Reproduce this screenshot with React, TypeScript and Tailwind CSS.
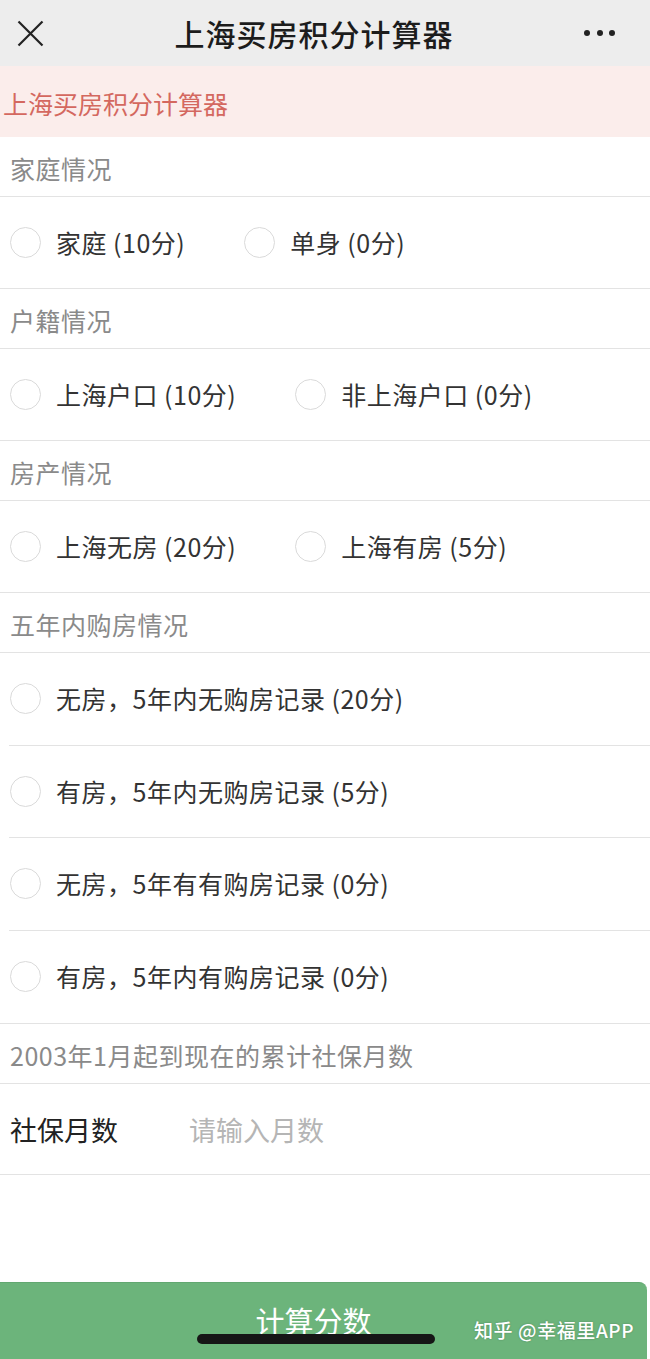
const font = "font-['Noto_Sans_CJK_SC','Noto_Sans',sans-serif]";

type Option = { label: string };

function Radio() {
  return (
    <span className="h-[31px] w-[31px] shrink-0 rounded-full border-[1.5px] border-[#dadada] bg-white" />
  );
}

function OptionItem({ label }: Option) {
  return (
    <div className="mr-[59px] flex items-center">
      <Radio />
      <span className="ml-[15px] text-[25px] leading-none tracking-[0.5px] text-[#333333]">{label}</span>
    </div>
  );
}

function SectionHeader({ title }: { title: string }) {
  return (
    <div className="flex h-[60px] items-center border-b border-[#e3e3e3] pl-[10px] pt-[4px] text-[25px] leading-none tracking-[0.5px] text-[#8a8a8a]">
      {title}
    </div>
  );
}

function InlineRow({ options }: { options: string[] }) {
  return (
    <div className="flex h-[92px] items-center border-b border-[#e3e3e3] pl-[10px]">
      {options.map((o) => (
        <OptionItem key={o} label={o} />
      ))}
    </div>
  );
}

const fiveYear = [
  "无房，5年内无购房记录 (20分)",
  "有房，5年内无购房记录 (5分)",
  "无房，5年有有购房记录 (0分)",
  "有房，5年内有购房记录 (0分)",
];

export default function App() {
  return (
    <div className={`relative flex h-[1359px] w-[650px] flex-col overflow-hidden bg-white ${font}`}>
      {/* 顶部导航 */}
      <div className="flex h-[66px] shrink-0 items-center bg-[#ededed]">
        <div className="flex w-[60px] items-center pl-[17px]">
          <svg width="27" height="27" viewBox="0 0 27 27" fill="none">
            <path d="M1.5 1.5L25.5 25.5M25.5 1.5L1.5 25.5" stroke="#222" strokeWidth="2.2" />
          </svg>
        </div>
        <div className="flex-1 text-center text-[30px] font-medium leading-none tracking-[1px] text-[#1c1c1c]">
          上海买房积分计算器
        </div>
        <div className="flex w-[82px] items-center gap-[6.5px] pl-[16px]">
          <span className="h-[6px] w-[6px] rounded-full bg-[#222]" />
          <span className="h-[6px] w-[6px] rounded-full bg-[#222]" />
          <span className="h-[6px] w-[6px] rounded-full bg-[#222]" />
        </div>
      </div>

      {/* 提示条 */}
      <div className="flex h-[71px] shrink-0 items-center bg-[#fbedeb] pl-[3px] pt-[4px] text-[25px] leading-none text-[#d4685f]">
        上海买房积分计算器
      </div>

      <SectionHeader title="家庭情况" />
      <InlineRow options={["家庭 (10分)", "单身 (0分)"]} />

      <SectionHeader title="户籍情况" />
      <InlineRow options={["上海户口 (10分)", "非上海户口 (0分)"]} />

      <SectionHeader title="房产情况" />
      <InlineRow options={["上海无房 (20分)", "上海有房 (5分)"]} />

      <SectionHeader title="五年内购房情况" />
      <div className="border-b border-[#e3e3e3]">
        {fiveYear.map((o, i) => (
          <div
            key={o}
            className={`ml-[9px] flex h-[92.5px] items-center pl-[1px] ${
              i < fiveYear.length - 1 ? "border-b border-[#e3e3e3]" : ""
            }`}
          >
            <OptionItem label={o} />
          </div>
        ))}
      </div>

      <SectionHeader title="2003年1月起到现在的累计社保月数" />
      <div className="flex h-[91px] shrink-0 items-center border-b border-[#e3e3e3] pl-[10px]">
        <span className="w-[179px] text-[27px] leading-none text-[#222]">社保月数</span>
        <input
          placeholder="请输入月数"
          className="w-[300px] bg-transparent text-[27px] leading-none text-[#222] outline-none placeholder:text-[#b5b5b5]"
        />
      </div>

      <div className="flex-1" />

      {/* 底部按钮 */}
      <button className="flex h-[77px] w-[647px] shrink-0 items-start justify-center rounded-tr-[8px] border-t border-[#62a871] bg-[#6cb47b] pt-[23px] pr-[20px] text-[29px] leading-none text-white">
        计算分数
      </button>

      <span className="absolute left-[474px] top-[1320px] text-[19px] font-medium leading-none tracking-[0.6px] text-white [text-shadow:0_0_2px_rgba(0,0,0,0.25)]">
        知乎 @幸福里APP
      </span>
      <span className="absolute left-[197px] top-[1334px] h-[10px] w-[238px] rounded-full bg-[#161616]" />
    </div>
  );
}
